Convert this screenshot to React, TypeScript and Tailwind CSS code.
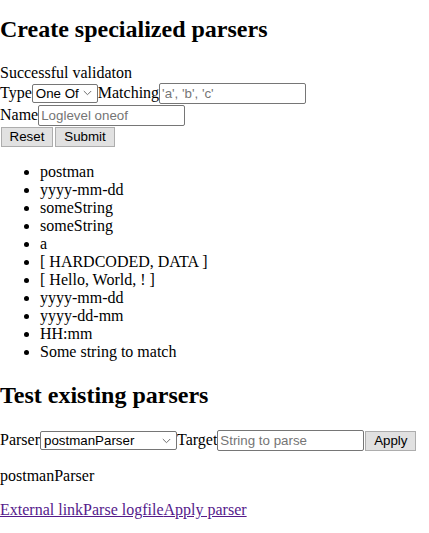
import React from 'react';

const Chevron = () => (
  <svg width="9" height="6" viewBox="0 0 9 6" className="absolute right-[6px] top-1/2 -translate-y-1/2 pointer-events-none">
    <path d="M0.8 1 L4.5 4.7 L8.2 1" fill="none" stroke="#6f6f6f" strokeWidth="1" />
  </svg>
);

const Select: React.FC<{ value: string; options: string[]; className: string }> = ({ value, options, className }) => (
  <span className={`relative inline-block shrink-0 ${className}`}>
    <select
      defaultValue={value}
      className="appearance-none w-full h-full border border-[#767676] rounded-[2px] bg-white pl-[3px] pr-[16px] text-[13.33px] leading-[15px] text-black font-['Liberation_Sans',Arial,sans-serif] outline-none"
    >
      {options.map((o) => (
        <option key={o}>{o}</option>
      ))}
    </select>
    <Chevron />
  </span>
);

const inputCls =
  "shrink-0 h-[21px] border border-[#767676] rounded-[2px] bg-white pl-[2px] text-[13.33px] text-black placeholder:text-[#757575] font-['Liberation_Sans',Arial,sans-serif] outline-none";

const btnCls =
  "shrink-0 h-[20px] border border-[#adadad] bg-[#e1e1e1] text-[13.33px] text-black font-['Liberation_Sans',Arial,sans-serif] leading-[16px]";

const items = [
  'postman',
  'yyyy-mm-dd',
  'someString',
  'someString',
  'a',
  '[ HARDCODED, DATA ]',
  '[ Hello, World, ! ]',
  'yyyy-mm-dd',
  'yyyy-dd-mm',
  'HH:mm',
  'Some string to match',
];

export default function App() {
  return (
    <div className="min-h-screen bg-white text-black font-['Liberation_Serif','Times_New_Roman',serif] text-[16px] leading-[18px] overflow-hidden">
      <section>
        <h1 className="pt-[15px] mb-[21px] text-[24px] font-bold leading-[28px]">Create specialized parsers</h1>
        <form onSubmit={(e) => e.preventDefault()}>
          <div>Successful validaton</div>
          {/* Type + Matching */}
          <div className="flex items-start h-[22px]">
            <span className="mt-[1.5px]">Type</span>
            <Select value="One Of" options={['One Of']} className="mt-[1.5px] w-[66px] h-[19px]" />
            <span className="mt-[1.5px]">Matching</span>
            <input className={`${inputCls} mt-[0.5px] w-[147px]`} placeholder="'a', 'b', 'c'" />
          </div>
          {/* Name */}
          <div className="flex items-start h-[23px]">
            <span className="mt-[1.5px]">Name</span>
            <input className={`${inputCls} mt-[0.5px] w-[147px]`} placeholder="Loglevel oneof" />
          </div>
          <div className="flex h-[20px] gap-[2px] pl-[1px]">
            <button type="reset" className={`${btnCls} w-[52px]`}>Reset</button>
            <button type="submit" className={`${btnCls} w-[60px]`}>Submit</button>
          </div>
        </form>
        <ul className="mt-[16px] list-disc pl-[40px]">
          {items.map((it, i) => (
            <li key={i}>{it}</li>
          ))}
        </ul>
      </section>
      <section>
        <h2 className="mt-[20px] mb-[20px] text-[24px] font-bold leading-[28px]">Test existing parsers</h2>
        <div className="flex items-start h-[22px]">
          <span className="mt-[2px]">Parser</span>
          <Select value="postmanParser" options={['postmanParser']} className="mt-[2px] w-[137px] h-[19px]" />
          <span className="mt-[2px]">Target</span>
          <input className={`${inputCls} mt-[1px] w-[147px]`} placeholder="String to parse" />
          <button className={`${btnCls} mt-[2px] ml-[1px] w-[51px]`}>Apply</button>
        </div>
        <p className="mt-[16px]">postmanParser</p>
        <p className="mt-[16px]">
          <a href="#" className="text-[#551a8b] underline">External link</a>
          <a href="#" className="text-[#551a8b] underline">Parse logfile</a>
          <a href="#" className="text-[#551a8b] underline">Apply parser</a>
        </p>
      </section>
    </div>
  );
}
